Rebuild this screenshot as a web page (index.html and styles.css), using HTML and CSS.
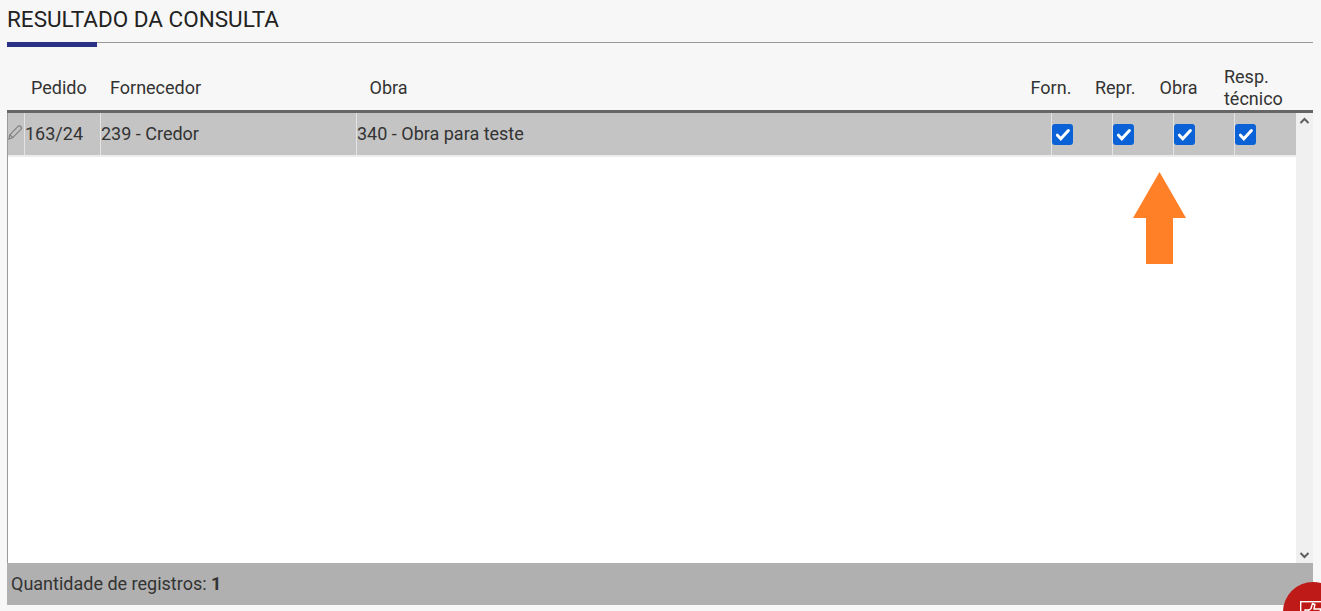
FILE: index.html
```html
<!DOCTYPE html>
<html lang="pt-BR">
<head>
<meta charset="utf-8">
<title>Resultado da consulta</title>
<link rel="stylesheet" href="styles.css">
</head>
<body>
<main class="page">
  <h1 class="title">RESULTADO DA CONSULTA</h1>
  <div class="rule"><span class="rule-accent"></span></div>
  <div class="grid-head">
    <div class="hc hc-pedido">Pedido</div>
    <div class="hc hc-forn">Fornecedor</div>
    <div class="hc hc-obra">Obra</div>
    <div class="hc hc-c1">Forn.</div>
    <div class="hc hc-c2">Repr.</div>
    <div class="hc hc-c3">Obra</div>
    <div class="hc hc-c4">Resp.<br>técnico</div>
  </div>
  <div class="grid-body">
    <div class="rows">
      <div class="row">
        <div class="cell c-edit">
          <svg class="pencil" width="15" height="15" viewBox="0 0 15 15" fill="none" stroke="#808080" stroke-width="1.2"><path d="M1.8 9.8 9.8 1.6a2 2 0 0 1 3 2.8L4.8 12.6 1 14z"/><path d="M1.8 9.8l3 2.8"/></svg>
        </div>
        <div class="cell c-pedido"><span class="txt">163/24</span></div>
        <div class="cell c-forn"><span class="txt">239 - Credor</span></div>
        <div class="cell c-obra"><span class="txt">340 - Obra para teste</span></div>
        <div class="cell c-check"><span class="check"><svg width="21" height="21" viewBox="0 0 21 21" fill="none" stroke="#fff" stroke-width="3" stroke-linecap="round"><path d="M5.4 11.2l3.4 3.6 7.6-8.2"/></svg></span></div>
        <div class="cell c-check"><span class="check"><svg width="21" height="21" viewBox="0 0 21 21" fill="none" stroke="#fff" stroke-width="3" stroke-linecap="round"><path d="M5.4 11.2l3.4 3.6 7.6-8.2"/></svg></span></div>
        <div class="cell c-check"><span class="check"><svg width="21" height="21" viewBox="0 0 21 21" fill="none" stroke="#fff" stroke-width="3" stroke-linecap="round"><path d="M5.4 11.2l3.4 3.6 7.6-8.2"/></svg></span></div>
        <div class="cell c-check c-last"><span class="check"><svg width="21" height="21" viewBox="0 0 21 21" fill="none" stroke="#fff" stroke-width="3" stroke-linecap="round"><path d="M5.4 11.2l3.4 3.6 7.6-8.2"/></svg></span></div>
      </div>
    </div>
    <div class="scrollbar">
      <svg width="17" height="12" viewBox="0 0 17 12" fill="none" stroke="#5f5f5f" stroke-width="2"><path d="M4.5 8 8.5 4l4 4"/></svg>
      <svg width="17" height="12" viewBox="0 0 17 12" fill="none" stroke="#5f5f5f" stroke-width="2"><path d="M4.5 4l4 4 4-4"/></svg>
    </div>
  </div>
  <div class="grid-foot">Quantidade de registros: <b>1</b></div>
</main>
<svg class="arrow" width="53" height="92" viewBox="0 0 53 92"><path fill="#ff8027" d="M26.5 0 53 46H40v46H13V46H0z"/></svg>
<div class="fab-clip">
  <div class="fab">
    <svg class="fab-icon" width="30" height="30" viewBox="0 0 30 30" fill="none" stroke="#fff" stroke-width="1.4"><rect x="0.7" y="0.7" width="28.6" height="28.6"/><path d="M5 9h3.5v9H5zM8.5 9.5l2.5-2 1.5-5 2.4 1-.9 4.5h6.5l-1 10H8.5"/></svg>
  </div>
</div>
</body>
</html>
```
FILE: styles.css
```css
html, body {
  margin: 0;
  height: 100%;
  overflow: hidden;
}
body {
  background: #f7f7f7;
  font-family: Roboto, "Liberation Sans", sans-serif;
  color: #333;
}
.page {
  display: flex;
  flex-direction: column;
  height: 605px;
  padding: 0 8px 0 7px;
}
.title {
  margin: 0;
  height: 42px;
  font-size: 22.5px;
  line-height: 39px;
  font-weight: 400;
  color: #222;
}
.rule {
  height: 1px;
  background: #999;
  flex: none;
}
.rule-accent {
  display: block;
  width: 90px;
  height: 5px;
  background: #2a3288;
}
.grid-head {
  display: flex;
  align-items: center;
  flex: none;
  box-sizing: border-box;
  height: 70px;
  padding-top: 23px;
  border-bottom: 3px solid #666;
  font-size: 18px;
  line-height: 22px;
  color: #333;
}
.hc { flex: none; }
.hc-pedido { margin-left: 24px; width: 79px; }
.hc-forn { width: 259.6px; }
.hc-obra { width: 661px; }
.hc-c1 { width: 64.4px; }
.hc-c2 { width: 64.6px; }
.hc-c3 { width: 64.4px; }
.hc-c4 { width: 80px; }
.grid-body {
  flex: 1;
  display: flex;
  min-height: 0;
  background: #fff;
  border-left: 1px solid #999;
}
.rows { flex: 1; min-width: 0; }
.row {
  display: flex;
  height: 44px;
  box-sizing: border-box;
  background: #c4c4c4;
  border-bottom: 2px solid #ececec;
  font-size: 18px;
  color: #333;
}
.cell {
  display: flex;
  align-items: center;
  flex: none;
  box-sizing: border-box;
  border-right: 1px solid #e4e4e4;
}
.txt { display: block; margin-top: -2px; }
.c-edit { width: 17px; }
.c-pedido { width: 76px; }
.c-forn { width: 256px; }
.c-obra { width: 695px; }
.c-check { width: 61px; }
.c-last { border-right: 0; }
.check {
  display: block;
  width: 21px;
  height: 21px;
  border-radius: 3px;
  background: #0b62d6;
}
.check svg { display: block; }
.pencil { display: block; margin-top: -3px; }
.scrollbar {
  flex: none;
  width: 17px;
  background: #f0f0f0;
  display: flex;
  flex-direction: column;
  justify-content: space-between;
  padding: 2px 0;
}
.scrollbar svg { display: block; }
.grid-foot {
  flex: none;
  height: 42px;
  line-height: 42px;
  background: #b0b0b0;
  padding-left: 4px;
  font-size: 18px;
  color: #333;
}
.grid-foot b { font-weight: 700; }
.arrow {
  position: absolute;
  left: 1133px;
  top: 172px;
}
.fab-clip {
  position: absolute;
  left: 1283px;
  top: 582px;
  width: 38px;
  height: 29px;
  overflow: hidden;
}
.fab {
  position: relative;
  width: 60px;
  height: 60px;
  border-radius: 50%;
  background: #be1a17;
}
.fab-icon {
  position: absolute;
  left: 17px;
  top: 19px;
}
```
